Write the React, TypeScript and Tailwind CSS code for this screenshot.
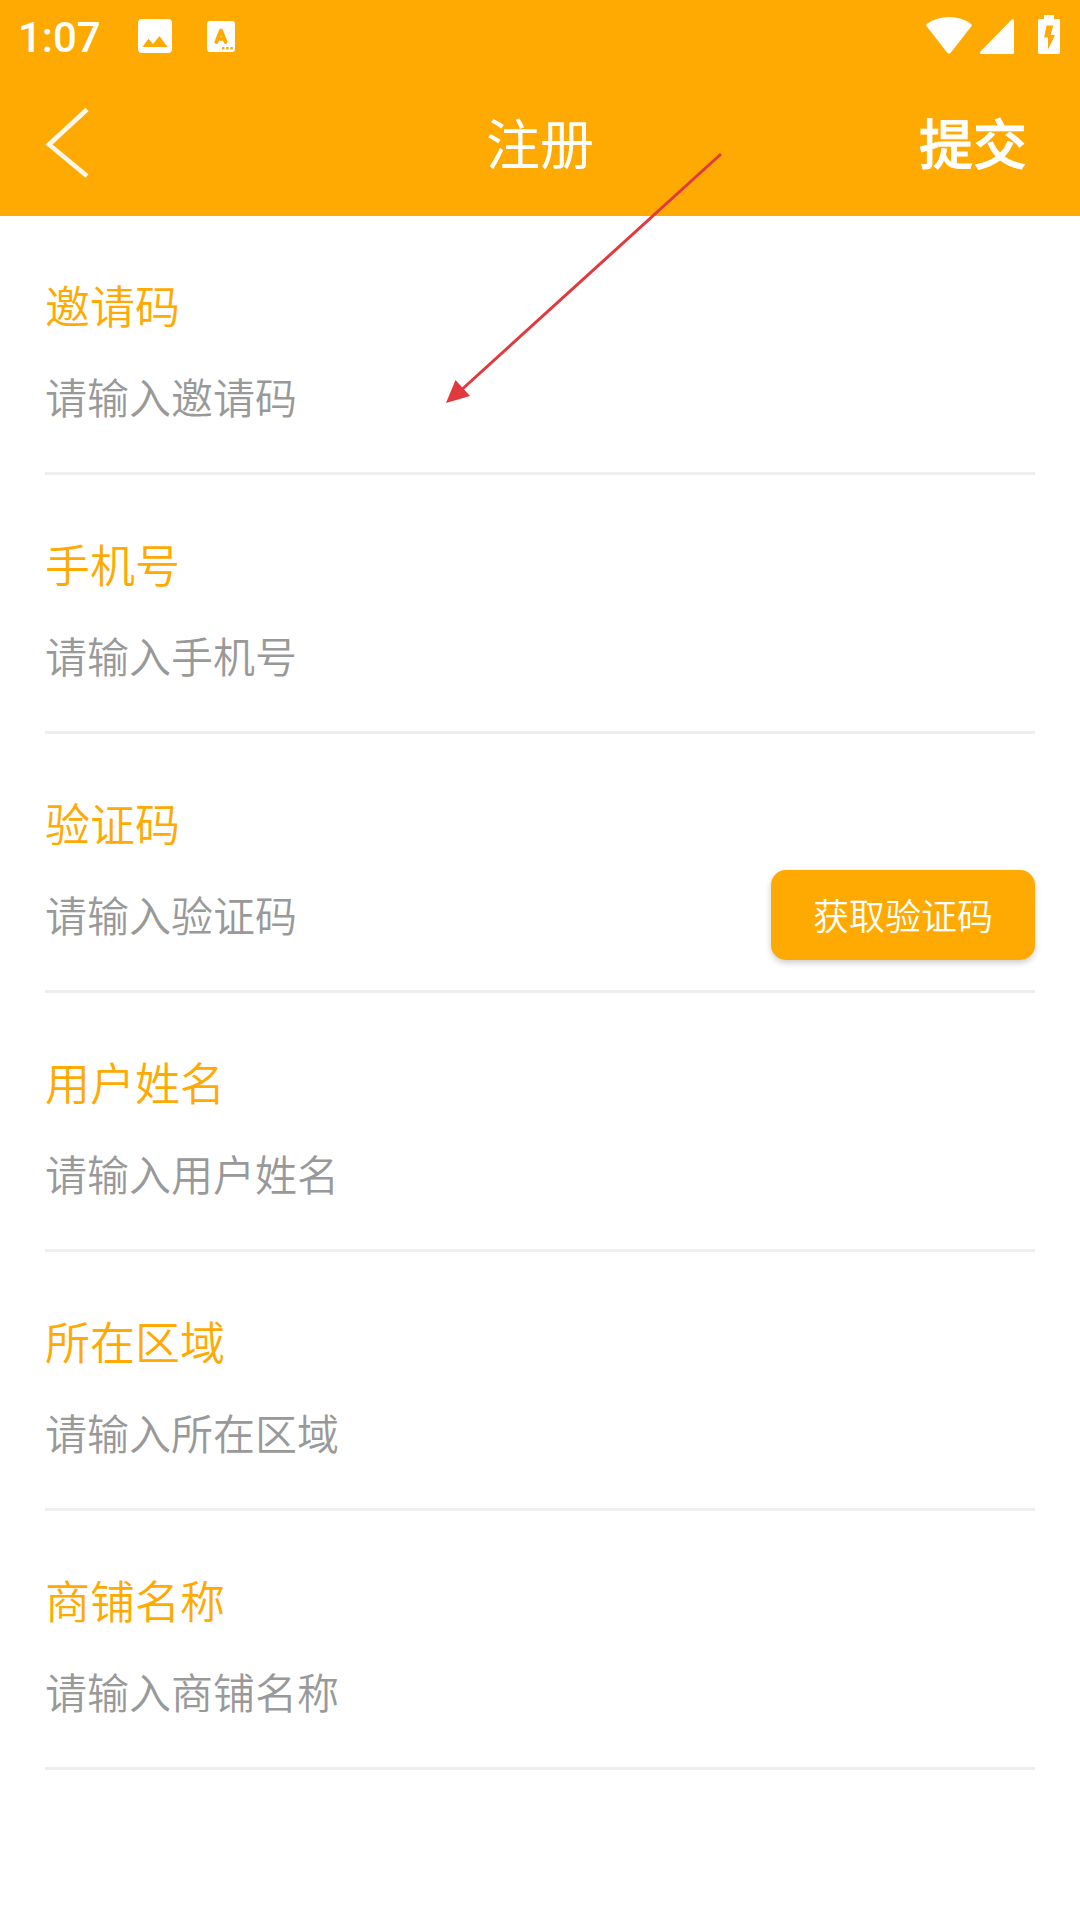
import { useState } from "react";

interface Field {
    name: string;
    label: string;
    hasCode?: boolean;
}

const fields: Field[] = [
    { name: "invite", label: "邀请码" },
    { name: "phone", label: "手机号" },
    { name: "code", label: "验证码", hasCode: true },
    { name: "username", label: "用户姓名" },
    { name: "area", label: "所在区域" },
    { name: "shop", label: "商铺名称" },
];

const StatusBar = () => {
    return (
        <div className="h-[72px] flex items-center justify-between pl-[18px] pr-5 text-white">
            <div className="flex items-center">
                <span className="w-[120px] font-['Roboto',sans-serif] font-medium text-[42px] leading-[72px] pt-[3px]">1:07</span>
                <svg width="34" height="34" viewBox="0 0 34 34" fill="currentColor">
                    <path fillRule="evenodd" d="M4 0H30Q34 0 34 4V30Q34 34 30 34H4Q0 34 0 30V4Q0 0 4 0ZM4.500 28H29.500L21.500 17L15 25L10.500 19.800Z" />
                </svg>
                <svg className="ml-[35px]" width="28" height="31" viewBox="0 0 28 31">
                    <rect width="28" height="31" rx="3" fill="currentColor" />
                    <path d="M9.300 21L14 9.500L18.700 21M10.500 17.800H17.500" fill="none" stroke="#ffaa03" strokeWidth="3.800" strokeLinecap="round" strokeLinejoin="round" />
                    <path d="M15 26h2.400v2.400H15zM19.200 26h2.400v2.400h-2.400zM23.400 26h2.400v2.400h-2.400z" fill="#ffaa03" />
                </svg>
            </div>
            <div className="flex items-end h-[39px] mb-[3px]">
                <svg width="46" height="37" viewBox="0 0 46 37" fill="currentColor">
                    <path d="M0.800 9.500Q-0.600 8 1.200 6.700Q10.500 0 23 0Q35.500 0 44.800 6.700Q46.600 8 45.200 9.500L24.700 35.700Q23 37.500 21.300 35.700Z" />
                </svg>
                <svg className="ml-2" width="34" height="35" viewBox="0 0 34 35" fill="currentColor">
                    <path d="M34 1.500V33.500Q34 35 32.500 35H1.500Q-1 34.500 0.500 32.500L31.500 0.800Q33.500 -0.500 34 1.500Z" />
                </svg>
                <svg className="ml-6" width="22" height="39" viewBox="0 0 22 39" fill="currentColor">
                    <path fillRule="evenodd" d="M6 0H16V4H20.500Q22 4 22 5.500V37.500Q22 39 20.500 39H1.500Q0 39 0 37.500V5.500Q0 4 1.500 4H6ZM8.500 10.500L6.200 22.500H10V34.500L17 20H12.500L15.500 10.500Z" />
                </svg>
            </div>
        </div>
    );
}

const Header = () => {
    return (
        <div className="h-36 grid grid-cols-3 items-center px-[45px] pb-[3px] text-white">
            <button className="justify-self-start">
                <svg width="46" height="72" viewBox="0 0 46 72" fill="none" stroke="#fff8ea" strokeWidth="4.600">
                    <path d="M42 2.500L4 37.500L42 69" />
                </svg>
            </button>
            <h1 className="pb-0.5 text-center text-[54px] leading-[80px]">注册</h1>
            <button className="justify-self-end mr-2 pb-0.5 text-[54px] leading-[80px] font-medium [-webkit-text-stroke:0.8px_white]">提交</button>
        </div>
    );
}

const App = () => {
    const [inputs, setInputs] = useState<Record<string, string>>({});

    return (
        <div className="relative w-[1080px] h-[1920px] overflow-hidden bg-white font-['Noto_Sans_CJK_SC',sans-serif]">
            <div className="bg-[#ffaa03]">
                <StatusBar />
                <Header />
            </div>

            <div className="px-[45px]">
                {fields.map((field) => (
                    <div key={field.name} className="h-[259px] pt-14 border-b-3 border-[#eeeeee]">
                        <label htmlFor={field.name} className="block text-[45px] leading-[66px] text-[#ffaa03] font-[350]">{field.label}</label>
                        <div className="flex items-center h-[90px] mt-3.5">
                            <input id={field.name} value={inputs[field.name] || ""} placeholder={"请输入" + field.label}
                                onChange={(e) => setInputs({ ...inputs, [field.name]: e.target.value })}
                                className="flex-1 min-w-0 h-[90px] pb-[3px] text-[42px] text-[#333333] placeholder:text-[#999999] font-[350] outline-none" />
                            {field.hasCode &&
                                <button className="w-[264px] h-[90px] pb-[3px] rounded-[15px] bg-[#ffaa03] text-white text-[36px] font-[350] shadow-[0_3px_6px_rgba(0,0,0,0.2)]">
                                    获取验证码
                                </button>}
                        </div>
                    </div>
                ))}
            </div>

            {/* red arrow pointing at the invite code */}
            <svg className="absolute left-[440px] top-[150px] pointer-events-none" width="290" height="260" viewBox="0 0 290 260">
                <path d="M281 4L18 243" stroke="#e0393e" strokeWidth="3" />
                <path d="M6 253L15.500 230L30 246Z" fill="#e0393e" />
            </svg>
        </div>
    );
}

export default App;
